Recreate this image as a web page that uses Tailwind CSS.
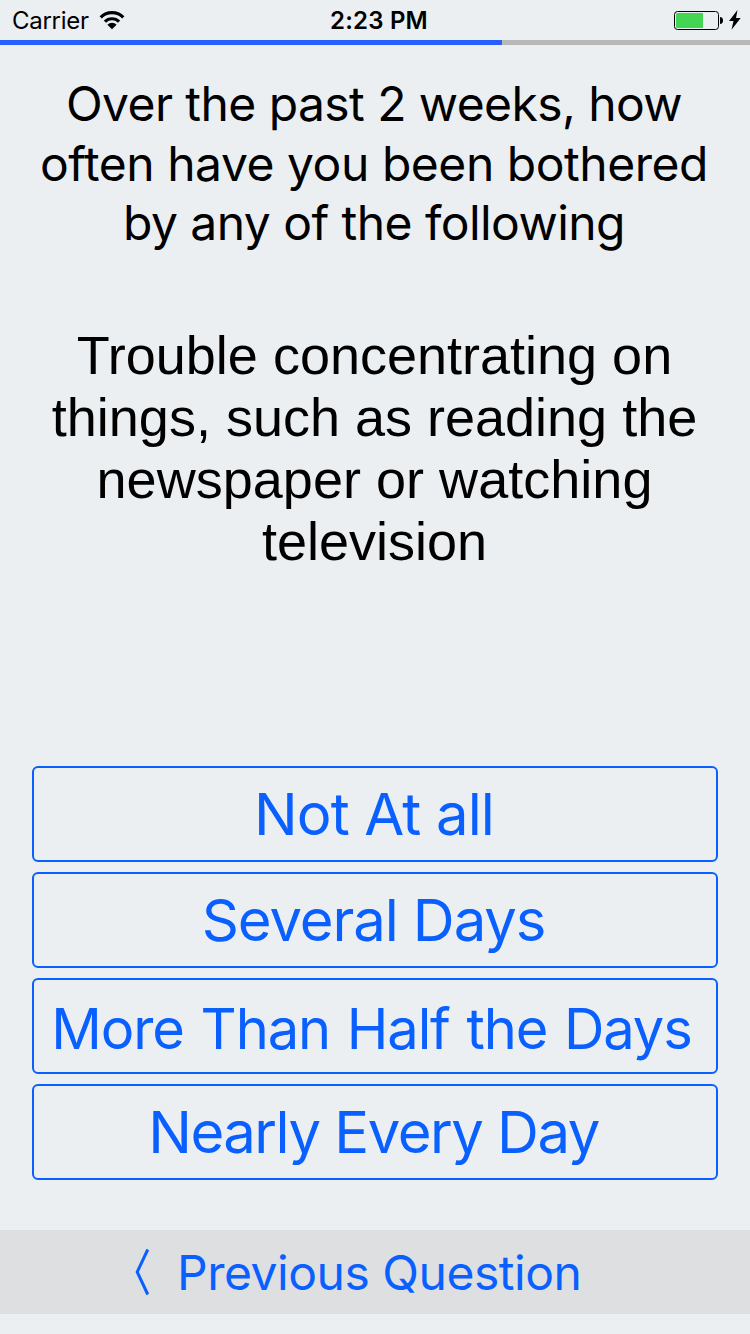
<!DOCTYPE html>
<html lang="en">
<head>
<meta charset="utf-8">
<title>Questionnaire</title>
<script src="https://cdn.jsdelivr.net/npm/@tailwindcss/browser@4"></script>
</head>
<body class="flex h-[1334px] w-[750px] flex-col overflow-hidden bg-[#ebeff2] font-['Inter',sans-serif] text-black">
  <header class="grid h-10 shrink-0 grid-cols-3 items-center pl-3 pr-[9px] text-2xl leading-[42px]">
    <div class="flex items-center gap-2.5">
      <span class="tracking-[-0.27px]">Carrier</span>
      <svg class="h-5 w-[26px]" viewBox="0 0 26 20" fill="none" stroke="#000" stroke-width="3.2"><path d="M1.700 6.300a16 16 0 0 1 22.600 0"/><path d="M5.900 10.700a10 10 0 0 1 14.200 0"/><path d="M13 18.200 8.400 13.700a6.300 6.300 0 0 1 9.200 0Z" fill="#000" stroke="none"/></svg>
    </div>
    <div class="pl-[5px] text-center font-semibold tracking-[0.2px]">2:23 PM</div>
    <div class="flex items-center justify-end gap-1.5">
      <svg class="h-5 w-[49px]" viewBox="0 0 49 20"><rect x=".5" y=".5" width="44" height="18" rx="3" fill="none" stroke="#000"/><path d="M3.500 2H29v15H3.500A1.500 1.500 0 0 1 2 15.500V3.500A1.500 1.500 0 0 1 3.500 2Z" fill="#44d553"/><path d="M46 6c2 0 3 1.500 3 3.500s-1 3.500-3 3.500Z"/></svg>
      <svg class="h-[22px] w-[12px]" viewBox="0 0 12 22"><path d="M8.500 0 0 11h4.500L2.500 19.800 11.700 8H7Z"/></svg>
    </div>
  </header>
  <div class="h-[5px] shrink-0 bg-[#b8b8b8]"><div class="h-full w-[502px] bg-[#2860fe]"></div></div>

  <main class="flex flex-col">
    <h1 class="mt-[29px] flex flex-col items-center pr-0.5 text-5xl leading-[60px]">
      <span class="h-[60px] whitespace-nowrap tracking-[-0.57px]">Over the past 2 weeks, how</span>
      <span class="h-[59px] whitespace-nowrap tracking-[-0.46px]">often have you been bothered</span>
      <span class="h-[60px] whitespace-nowrap tracking-[-0.56px]">by any of the following</span>
    </h1>
    <h2 class="mt-[71px] flex flex-col items-center pr-px font-['Liberation_Sans',sans-serif] text-[54px] leading-[62px]">
      <span class="whitespace-nowrap">Trouble concentrating on</span>
      <span class="whitespace-nowrap">things, such as reading the</span>
      <span class="whitespace-nowrap tracking-[0.03px]">newspaper or watching</span>
      <span class="whitespace-nowrap">television</span>
    </h2>
    <div class="mt-[194px] flex flex-col gap-2.5 px-8 text-[58px] text-[#0a60ff]">
      <button class="flex h-24 items-center justify-center whitespace-nowrap rounded-md border-2 border-[#0a60ff] pr-0.5 tracking-[-0.85px]">Not At all</button>
      <button class="flex h-24 items-center justify-center whitespace-nowrap rounded-md border-2 border-[#0a60ff] pr-[3px] tracking-[-1.1px]">Several Days</button>
      <button class="flex h-24 items-center justify-center whitespace-nowrap rounded-md border-2 border-[#0a60ff] pr-[7px] pt-1.5 text-[56px] tracking-[-1.08px] [word-spacing:2px]">More Than Half the Days</button>
      <button class="flex h-24 items-center justify-center whitespace-nowrap rounded-md border-2 border-[#0a60ff] pr-[3px] tracking-[-1.5px]">Nearly Every Day</button>
    </div>
  </main>
  <footer class="mt-[50px] flex h-[84px] shrink-0 items-center bg-[#dddfe1] pl-[135px] text-[#0a60ff]">
    <svg class="h-[48px] w-[15px]" viewBox="0 0 15 48" fill="none" stroke="currentColor" stroke-width="3"><path d="M12.800 1.500 2.200 24 12.800 46.500"/></svg>
    <span class="ml-[27px] whitespace-nowrap pt-0.5 text-5xl tracking-[-0.47px]">Previous Question</span>
  </footer>
</body>
</html>
